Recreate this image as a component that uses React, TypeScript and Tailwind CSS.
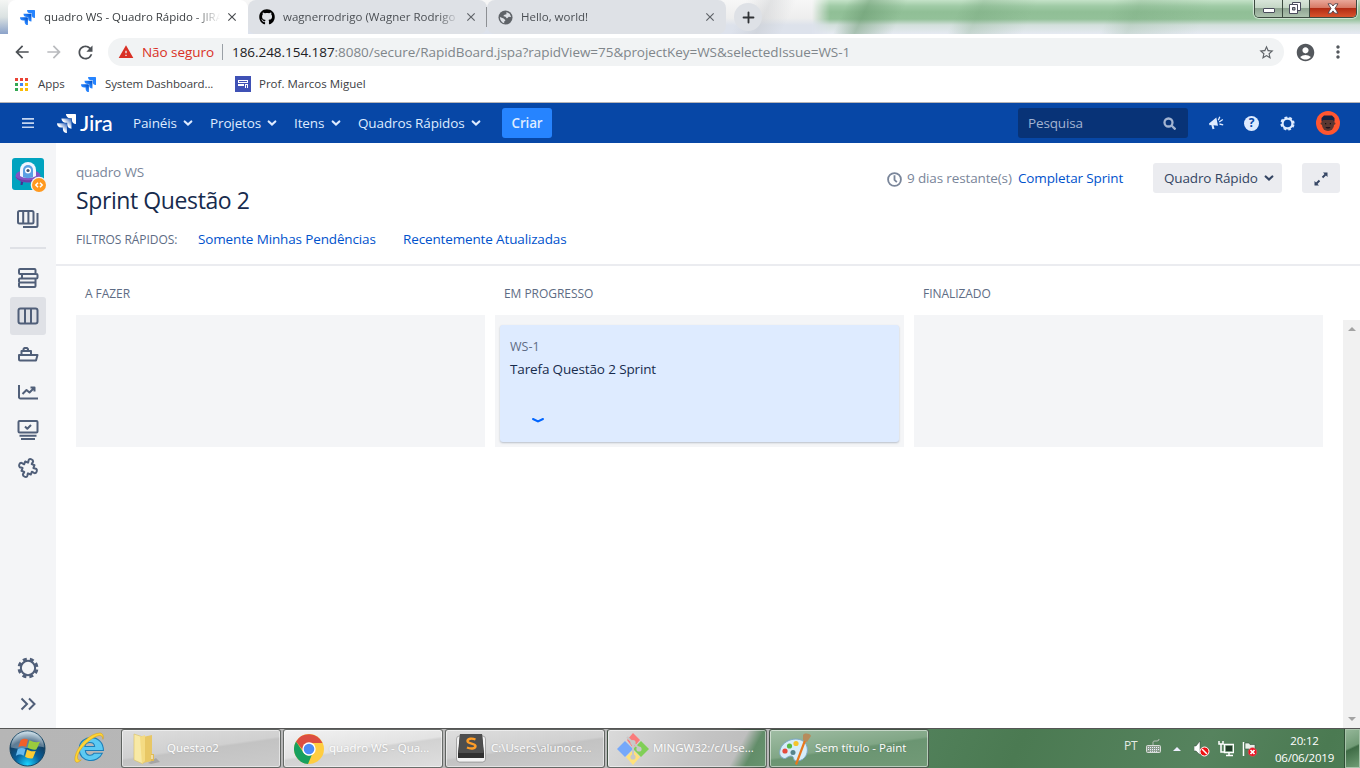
import React from "react";
import { MdAccountCircle, MdArrowBack, MdArrowForward, MdClose, MdMoreVert, MdPublic, MdRefresh, MdStarBorder, MdWarning } from "react-icons/md";
import { FaGithub } from "react-icons/fa";
import { Plus } from "lucide-react";

const JiraMark = ({ className, white = false, id }: { className: string; white?: boolean; id: string }) => {
  const dark = white ? "#4a78c4" : "#0052cc";
  const light = white ? "#ffffff" : "#2684ff";
  return (
    <svg className={className} viewBox="0 0 24 24">
      <defs>
        <linearGradient id={id} x1="1" y1="0" x2="0.35" y2="0.65">
          <stop offset="0.15" stopColor={dark} />
          <stop offset="0.8" stopColor={light} />
        </linearGradient>
      </defs>
      <path fill={light} d="M23 0H11.3a5.300 5.300 0 0 0 5.300 5.300h2.200v2.100a5.300 5.300 0 0 0 5.200 5.300V1a1 1 0 0 0-1-1z" />
      <path fill={`url(#${id})`} d="M17.200 5.800H5.600A5.300 5.300 0 0 0 10.900 11.100H13v2.200a5.300 5.300 0 0 0 5.300 5.200V6.800a1 1 0 0 0-1.100-1z" />
      <path fill={`url(#${id})`} d="M11.500 11.600H0a5.300 5.300 0 0 0 5.200 5.300h2.200v2.100a5.300 5.300 0 0 0 5.200 5V12.600a1 1 0 0 0-1.100-1z" />
    </svg>
  );
};

const Chevron = ({ className }: { className: string }) => (
  <svg className={className} viewBox="0 0 10 8" fill="none" stroke="currentColor" strokeWidth="2.200">
    <path d="M1.700 2.500L5 5.500l3.300-3" strokeLinecap="round" />
  </svg>
);

const Gear = ({ className, thick = 2.2 }: { className: string; thick?: number }) => (
  <svg className={className} viewBox="0 0 24 24" fill="none" stroke="currentColor">
    <circle cx="12" cy="12" r="7.800" strokeWidth={thick} />
    <circle cx="12" cy="12" r="9.700" strokeWidth="3.400" strokeDasharray="4.300 3.318" strokeDashoffset="-1.700" />
  </svg>
);

const SideIcon = ({ children }: { children: React.ReactNode }) => (
  <svg className="h-6 w-6" viewBox="0 0 24 24" fill="none" stroke="#505f79" strokeWidth="2" strokeLinejoin="round">
    {children}
  </svg>
);

const TabStrip = () => (
  <div className="flex h-[34px] shrink-0 overflow-hidden bg-[linear-gradient(180deg,#c4e2c8_0px,#a0cba6_6px,#90bf96_12px,#93c199_19px,#d3e0dc_25px,#e6eaf2_34px)]">
    <div className="flex h-full w-[832px] bg-[linear-gradient(115deg,transparent_88%,#b9bcc055_91%,transparent_94%),linear-gradient(180deg,#f7f7f7_0px,#eeeeee_18px,#dde2eb_25px,#dde2ec_34px)] [mask-image:linear-gradient(90deg,#000_812px,transparent_830px)]">
      <div className="h-full w-2 bg-[linear-gradient(180deg,#f4f6f4,#dbe2e2_50%,#8ba2c9)]" />
      <div className="flex h-full w-60 items-center rounded-t-lg bg-white pl-3">
        <JiraMark id="tab" className="h-[15px] w-[15px]" />
        <span className="ml-[9px] w-[176px] overflow-hidden whitespace-nowrap text-[11.5px] tracking-[-0.05px] text-[#3c4043] [mask-image:linear-gradient(90deg,#000_150px,transparent_176px)]">quadro WS - Quadro Rápido - JIRA</span>
        <MdClose className="ml-[5px] h-[14px] w-[14px] text-[#494c50]" />
      </div>
      <div className="flex h-full w-[239px] items-center rounded-lg bg-[#dee1e6] pl-[11px]">
        <FaGithub className="h-4 w-4 text-black" />
        <span className="ml-2 w-[172px] overflow-hidden whitespace-nowrap text-[11.5px] tracking-[0.02px] text-[#4b4f54] [mask-image:linear-gradient(90deg,#000_155px,transparent_176px)]">wagnerrodrigo (Wagner Rodrigo)</span>
        <MdClose className="ml-[9px] h-[14px] w-[14px] text-[#5f6368]" />
        <div className="ml-2 h-5 w-px bg-[#8d9094]" />
      </div>
      <div className="flex h-full w-[239px] items-center rounded-lg bg-[#dee1e6] pl-[11px]">
        <svg className="h-[15px] w-[15px]" viewBox="0 0 16 16"><circle cx="8" cy="8" r="7.500" fill="#5f6368" /><path d="M9 2.200l3.500 1.900L14 7.500l-2.500-.3L9.500 9 8 7.200 5.500 6.500 7 5l2-.6zM2 7.500l4 1.500 2 1.800-1.500 1.700.2 1.500C4 13.500 2 11 2 7.500z" fill="#dee1e6" /></svg>
        <span className="ml-[8px] w-[181px] whitespace-nowrap text-[11.5px] text-[#4b4f54]">Hello, world!</span>
        <MdClose className="ml-[1px] h-[14px] w-[14px] text-[#5f6368]" />
      </div>
      <div className="mt-[3px] ml-[8px] flex h-7 w-7 items-center justify-center rounded-full bg-[#dee1e6]">
        <Plus className="h-[17px] w-[17px] text-[#303336]" strokeWidth={2.6} />
      </div>
    </div>
    <div className="flex flex-1 justify-end bg-[linear-gradient(115deg,transparent_3%,#5d8e6470_7%,transparent_14%,transparent_24%,#6a9a7040_28%,transparent_38%,transparent_52%,#6a9a7033_57%,transparent_70%)] pr-[3px]">
      <div className="flex h-[18px] w-[103px] overflow-hidden rounded-b-[5px] border border-t-0 border-[#3c4a40] shadow-[0_0_1px_1px_#ffffff99]">
        <div className="flex w-[28px] items-end justify-center border-r border-[#3c4a40] bg-[linear-gradient(#d9e6da_0,#c4d6c5_45%,#8fa592_50%,#adc2ae)] pb-[4px]">
          <div className="h-[5px] w-3 rounded-[1px] border border-[#4a4c5c] bg-white" />
        </div>
        <div className="flex w-[27px] items-center justify-center border-r border-[#3c4a40] bg-[linear-gradient(#d9e6da_0,#c4d6c5_45%,#8fa592_50%,#adc2ae)]">
          <svg className="mr-[2px] mb-[2px] h-3 w-3" viewBox="0 0 12 12" fill="#fff" stroke="#4a4c5c"><path d="M3.500.5h8v8h-8z" /><path d="M.5 2.500h8v9h-8z" /><path d="M3.500 5.500h2.500v2.500H3.500z" fill="#9aa59c" /></svg>
        </div>
        <div className="flex flex-1 items-center justify-center bg-[linear-gradient(#e9a799_0,#d87b67_44%,#b32c14_50%,#d8532c)]">
          <svg className="mb-[1px] h-[11px] w-3" viewBox="0 0 12 11"><path d="M1 .8h3.200L6 3 7.800.8H11L8 5.400l3 4.800H7.800L6 7.900l-1.800 2.300H1l3-4.800z" fill="#fff" stroke="#51434c" strokeWidth=".9" /></svg>
        </div>
      </div>
    </div>
  </div>
);

const Toolbar = () => (
  <>
    <div className="flex h-9 shrink-0 items-center bg-white pl-[12px]">
      <MdArrowBack className="h-5 w-5 text-[#4d5156]" />
      <MdArrowForward className="ml-[12px] h-5 w-5 text-[#b9bbbe]" />
      <MdRefresh className="ml-[11px] h-[21px] w-[21px] text-[#4d5156]" />
      <div className="ml-[12px] flex h-7 w-[1176px] items-center rounded-full bg-[#f1f3f4] pl-[10px] text-[13.5px] whitespace-nowrap">
        <MdWarning className="h-4 w-4 text-[#d93025]" />
        <span className="ml-2 w-[72px] pt-px tracking-[-0.06px] text-[#d93025]">Não seguro</span>
        <span className="ml-2 h-4 w-px bg-[#9aa0a6]" />
        <span className="ml-[9px] w-[1025px] pt-px tracking-[-0.045px] text-[#80868b]"><span className="text-[#202124]">186.248.154.187</span>:8080/secure/RapidBoard.jspa?rapidView=75&amp;projectKey=WS&amp;selectedIssue=WS-1</span>
        <MdStarBorder className="ml-px h-[17px] w-[17px] text-[#5f6368]" />
      </div>
      <MdAccountCircle className="ml-[11px] h-[21px] w-[21px] text-[#54585d]" />
      <MdMoreVert className="ml-[12px] h-5 w-5 text-[#54585d]" />
    </div>
    <div className="flex h-[33px] shrink-0 items-start border-b border-[#b6b4b6] bg-white pt-[6px] pl-[15px] text-[11.5px] text-[#3c4043]">
      <div className="flex h-4 items-center whitespace-nowrap">
        <svg className="h-[13px] w-[13px]" viewBox="0 0 13 13">
          <path fill="#ea4335" d="M0 0h3v3H0zM5 0h3v3H5zM10 0h3v3h-3z" />
          <path fill="#34a853" d="M0 5h3v3H0zM0 10h3v3H0z" /><path fill="#4285f4" d="M5 5h3v3H5z" /><path fill="#fbbc05" d="M10 5h3v3h-3zM5 10h3v3H5zM10 10h3v3h-3z" />
        </svg>
        <span className="ml-[10px] w-[27px]">Apps</span>
        <JiraMark id="bookmark" className="ml-4 h-[15px] w-[15px]" />
        <span className="ml-[9px] w-[110px] tracking-[-0.1px]">System Dashboard...</span>
        <svg className="ml-5 h-4 w-4" viewBox="0 0 16 16"><path fill="#3f51b5" d="M0 0h16v16H0z" /><path fill="#fff" d="M3 4h10v3H3zM3 8h6v2H3zM10 8h3v4h-3z" /><path fill="#3f51b5" d="M4 5h8v1H4zM11 9h1v3h-1z" /></svg>
        <span className="ml-2">Prof. Marcos Miguel</span>
      </div>
    </div>
  </>
);

const NavItem = ({ label, width }: { label: string; width: string }) => (
  <div className="mr-[17px] flex items-center text-[#deebff]">
    <span className={`${width} pt-px whitespace-nowrap`}>{label}</span>
    <Chevron className="ml-[7px] h-2 w-[10px]" />
  </div>
);

const JiraHeader = () => (
  <header className="flex h-10 shrink-0 items-center bg-[#0747a6] text-[13.5px] tracking-[-0.13px]">
    <svg className="ml-[22px] h-3 w-3" viewBox="0 0 12 12" fill="#c5d6f0"><path d="M0 1h12v1.700H0zM0 5.200h12v1.700H0zM0 9.400h12v1.700H0z" /></svg>
    <JiraMark id="logo" white className="ml-[23px] h-[19px] w-[19px]" />
    <span className="ml-1 w-[33px] font-[Lato] text-[22px] leading-5 font-medium tracking-[-0.2px] text-white">Jira</span>
    <div className="ml-5 flex">
      <NavItem label="Painéis" width="w-[43px]" />
      <NavItem label="Projetos" width="w-[50px]" />
      <NavItem label="Itens" width="w-[30px]" />
      <NavItem label="Quadros Rápidos" width="w-[106px]" />
    </div>
    <button className="ml-[4px] h-[30px] w-[50px] rounded-[3px] bg-[#2684ff] pt-px font-semibold tracking-[-0.2px] text-[#deebff]">Criar</button>
    <div className="ml-auto flex h-[30px] w-[170px] items-center justify-between rounded-[3px] bg-[#083377] pr-3 pl-[10px] text-[#a3b4d1]">
      <span className="pt-px">Pesquisa</span>
      <svg className="h-[13px] w-[13px]" viewBox="0 0 13 13" fill="none" stroke="currentColor" strokeWidth="2.300"><circle cx="5.500" cy="5.500" r="4" /><path d="M8.500 8.500l4 4" /></svg>
    </div>
    <svg className="ml-[20px] h-4 w-4" viewBox="0 0 16 16" fill="#deebff">
      <path d="M8.300 2.500L10 10.800l-4.500-.6 1 3.600-2 .5-1.200-4.300-1.800.2L1 8.500z" />
      <path d="M10.300 5.300l1.500-3.500M11.200 7l3.600-2.500M11.500 9l3.700.8" stroke="#deebff" strokeWidth="1.300" />
    </svg>
    <div className="ml-[20px] flex h-[15px] w-[15px] items-center justify-center rounded-full bg-[#deebff] text-[12px] leading-none font-bold tracking-normal text-[#0747a6]">?</div>
    <Gear className="ml-[21px] h-[15px] w-[15px] text-[#deebff]" thick={3.4} />
    <svg className="mr-5 ml-[21px] h-6 w-6" viewBox="0 0 24 24"><circle cx="12" cy="12" r="12" fill="#ff5630" /><path d="M6 8h12v6a6 6 0 0 1-12 0z" fill="#5b3731" /><circle cx="5.800" cy="12.500" r="1.200" fill="#5b3731" /><circle cx="18.200" cy="12.500" r="1.200" fill="#5b3731" /><path d="M5.500 11V7L8 4.500h8L18.500 7v4l-1.500-2H7z" fill="#112345" /><path d="M9 12h1.200v1.200H9zm4.800 0H15v1.200h-1.200z" fill="#111" /><path d="M9.500 16h5c-.7 2-4.300 2-5 0z" fill="#1d1220" /></svg>
  </header>
);

const Sidebar = () => (
  <aside className="flex w-14 shrink-0 flex-col items-center bg-[#f4f5f7] text-[#505f79]">
    <div className="mt-[15px] h-8 w-8">
      <svg className="h-[36px] w-[36px]" viewBox="0 0 36 36">
        <rect width="32" height="32" rx="3" fill="#00a3bf" /><path d="M9 22l-.5 5h2l1-4zM20 22h3v6h-3z" fill="#403294" />
        <ellipse cx="16" cy="18" rx="12.500" ry="6.500" fill="#8254c4" /><path d="M3.500 18.500c5 5 20 5 25 0-2 7.500-22 8-25 0z" fill="#6b3fa8" />
        <path d="M8 18V12a8 8 0 0 1 16 0v6c-3 2.500-13 2.500-16 0z" fill="#f0f5ff" /><path d="M11 19v-7a5 5 0 0 1 10 0v7c-2 1.500-8 1.500-10 0z" fill="#5aa0e4" />
        <circle cx="16" cy="12.500" r="3" fill="#fff" /><circle cx="16" cy="12.500" r="1.600" fill="#42526e" />
        <circle cx="27" cy="27" r="8.300" fill="#f4f5f7" /><circle cx="27" cy="27" r="7" fill="#ff991f" /><path d="M26 24.800L23.800 27l2.200 2.200M28 24.800l2.200 2.200-2.200 2.200" fill="none" stroke="#fff" strokeWidth="1.500" />
      </svg>
    </div>
    <div className="mt-[17px]"><SideIcon><rect x="2" y="4" width="15.500" height="12.500" rx="1.500" /><path d="M7.200 4v12.500M12.400 4v12.500M21.500 6v12.500a1.500 1.500 0 0 1-1.500 1.500H7" /></SideIcon></div>
    <div className="mt-[16px] h-[2px] w-9 bg-[#dfe1e6]" />
    <div className="mt-[10px] flex flex-col">
      <div className="flex h-[38px] w-9 items-center justify-center"><SideIcon><path d="M4 3h14.500a1 1 0 0 1 1 1v4H4a1 1 0 0 1-1-1V4a1 1 0 0 1 1-1zM7 8h13.500a1 1 0 0 1 1 1v2.500a1 1 0 0 1-1 1H6V9M4 12.500h15.500v4H4a1 1 0 0 1-1-1v-2a1 1 0 0 1 1-1zM4 16.500h15.500V20a1 1 0 0 1-1 1H4a1 1 0 0 1-1-1v-2.500a1 1 0 0 1 1-1z" /></SideIcon></div>
      <div className="flex h-[38px] w-9 items-center justify-center rounded-[3px] bg-[#dfe1e6]"><SideIcon><rect x="2.500" y="4.500" width="19" height="15" rx="2" /><path d="M9 4.500v15M15 4.500v15" /></SideIcon></div>
      <div className="flex h-[38px] w-9 items-center justify-center"><SideIcon><path d="M3 13h18.500l-1.500 5.500H4a1 1 0 0 1-1-1zM5.500 13V9H15v4M7.500 9V7.200L8.500 6H11l1 1.200V9" /></SideIcon></div>
      <div className="flex h-[38px] w-9 items-center justify-center"><SideIcon><path d="M3 5v12.500A1.500 1.500 0 0 0 4.500 18.500H22M6.500 14l4-4 3 2.500 5-5M14.500 7.500h4v4" /></SideIcon></div>
      <div className="flex h-[38px] w-9 items-center justify-center"><SideIcon><rect x="2.500" y="3" width="19" height="11.500" rx="1" /><path d="M9 8.500l2.300 2.300L15 7M3.500 17.800h17M5 21h14" /></SideIcon></div>
      <div className="flex h-[38px] w-9 items-center justify-center"><SideIcon><path transform="rotate(22 12 12)" d="M10 7c.3-1.300-.6-1.800-.3-3 .6-1.800 4-1.800 4.600 0 .3 1.200-.6 1.700-.3 3h3v3c1.300.3 1.800-.6 3-.3 1.800.6 1.800 4 0 4.600-1.200.3-1.700-.6-3-.3v3h-3c-.3 1.300.6 1.800.3 3-.6 1.800-4 1.800-4.600 0-.3-1.200.6-1.700.3-3H7v-3c-1.300-.3-1.800.6-3 .3-1.800-.6-1.800-4 0-4.600 1.200-.3 1.700.6 3 .3V7z" /></SideIcon></div>
    </div>
    <Gear className="mt-[170px] h-[22px] w-[22px]" />
    <svg className="mt-[17px] h-4 w-4" viewBox="0 0 16 16" fill="none" stroke="currentColor" strokeWidth="2"><path d="M1.500 2.500L7 8l-5.500 5.500M9 2.500L14.500 8 9 13.500" /></svg>
  </aside>
);

const Column = ({ title, children }: { title: string; children?: React.ReactNode }) => (
  <section className="w-[409px]">
    <h2 className="flex h-[49px] items-center pt-[7px] pl-[9px] text-[12px] tracking-[-0.05px] font-medium text-[#5e6c84]">{title}</h2>
    <div className="h-[132px] bg-[#f4f5f7] px-[5px] pt-[10px]">{children}</div>
  </section>
);

const Board = () => (
  <main className="flex min-w-0 flex-1 flex-col bg-white text-[13.5px] tracking-[-0.14px]">
    <div className="flex h-[123px] shrink-0 justify-between border-b-2 border-[#ebecf0] pr-5 pl-5">
      <div className="whitespace-nowrap">
        <p className="mt-5 h-[18px] leading-[18px] text-[#7a869a]">quadro WS</p>
        <h1 className="mt-[4px] h-[30px] text-[23px] leading-[30px] tracking-[-0.4px] text-[#172b4d]">Sprint Questão 2</h1>
        <div className="mt-[15px] flex h-[18px] items-center">
          <span className="w-[122px] pt-px text-[12px] tracking-[-0.05px] text-[#5e6c84]">FILTROS RÁPIDOS:</span>
          <a className="w-[205px] text-[#0052cc]">Somente Minhas Pendências</a>
          <a className="text-[#0052cc]">Recentemente Atualizadas</a>
        </div>
      </div>
      <div className="mt-5 flex h-[30px] items-center whitespace-nowrap">
        <svg className="mt-[2px] h-[15px] w-[15px]" viewBox="0 0 14 14" fill="none" stroke="#7a869a" strokeWidth="1.700"><circle cx="7" cy="7" r="6" /><path d="M7 3v4.300l2.200 2.200" /></svg>
        <span className="ml-[5px] w-[111px] pt-px text-[#7a869a]">9 dias restante(s)</span>
        <a className="w-[135px] pt-px text-[#0052cc]">Completar Sprint</a>
        <button className="flex h-[30px] w-[129px] items-center rounded-[3px] bg-[#ebecf0] pl-[11px] text-[#344563]"><span className="w-[94px] pt-px text-left">Quadro Rápido</span><Chevron className="ml-[6px] h-2 w-[10px]" /></button>
        <button className="ml-5 flex h-[30px] w-[38px] items-center justify-center rounded-[3px] bg-[#ebecf0]">
          <svg className="mt-px h-[14px] w-[14px]" viewBox="0 0 14 14" fill="#344563" stroke="#344563"><path d="M9 .5h4.500V5zM.5 9v4.500H5z" stroke="none" /><path d="M8.500 5.500l3-3M2.500 11.500l3-3" strokeWidth="1.900" /></svg>
        </button>
      </div>
    </div>
    <div className="flex flex-1">
      <div className="ml-5 flex gap-[10px]">
        <Column title="A FAZER" />
        <Column title="EM PROGRESSO">
          <article className="flex h-[117px] flex-col rounded-[3px] bg-[#deebff] pt-3 pl-[10px] shadow-[0_1px_2px_#091e4240]">
            <span className="h-[18px] text-[12.5px] leading-[20px] tracking-normal text-[#5e6c84]">WS-1</span>
            <span className="mt-[5px] h-[18px] leading-[18px] text-[#172b4d]">Tarefa Questão 2 Sprint</span>
            <svg className="mt-[38px] ml-[21px] h-2 w-[14px]" viewBox="0 0 14 8" fill="none" stroke="#0065ff" strokeWidth="2"><path d="M2 3l5 2.500L12 3" strokeLinecap="round" /></svg>
          </article>
        </Column>
        <Column title="FINALIZADO" />
      </div>
      <div className="mt-[54px] ml-auto flex w-[17px] flex-col items-center justify-between bg-[#f1f1f1] py-[7px]">
        <div className="border-x-4 border-b-4 border-x-transparent border-b-[#a3a3a3]" />
        <div className="border-x-4 border-t-4 border-x-transparent border-t-[#a3a3a3]" />
      </div>
    </div>
  </main>
);

const TaskButton = ({ icon, label, tone }: { icon: React.ReactNode; label: string; tone: string }) => (
  <div className={`mr-[2px] flex h-[39px] w-[160px] shrink-0 items-center rounded-[3px] border border-[#303631b0] pl-[9px] text-[11.5px] whitespace-nowrap text-white shadow-[inset_0_0_0_1px_#ffffff80] [text-shadow:0_0_2px_#0003] ${tone}`}>
    <div className="flex w-8 items-center justify-center">{icon}</div>
    <span className="mb-[2px] ml-1">{label}</span>
  </div>
);

const glass = "bg-[linear-gradient(172deg,#dedede_0,#d0d0d0_48%,#c3c3c3_52%,#cbcbcb)]";

const Taskbar = () => (
  <footer className="flex h-10 shrink-0 items-end border-t border-[#555] bg-[linear-gradient(115deg,#b6b6b6_0,#b9b9b9_743px,#568560_770px,#4b7a52_930px,#56835e_1100px,#4b7a52_1210px,#56835e_1360px)]">
    <div className="flex h-[39px] w-[55px] items-center justify-center">
      <svg className="h-[37px] w-[37px]" viewBox="0 0 38 38">
        <defs><radialGradient id="orb" cx=".5" cy=".95" r=".9"><stop stopColor="#19d4ff" /><stop offset=".4" stopColor="#08609c" /><stop offset=".75" stopColor="#123d60" /><stop offset="1" stopColor="#a8c4d4" /></radialGradient></defs>
        <circle cx="19" cy="19" r="18" fill="url(#orb)" stroke="#164462" /><path d="M2 18a17 17 0 0 1 34 0c-9-4-22 4-34 0z" fill="#fff" opacity=".32" />
        <path d="M12 10.500c3-2 5-2 7.500-.5L17.500 17.500c-3-1.500-5-1-8 0z" fill="#f0602a" /><path d="M21 10.500c4 2 7 2.500 11 1.500-2 3-2 5-4 8-3 .5-6 0-9-2z" fill="#9acb3c" /><path d="M9 19.500c3-1.500 5.500-1.500 8 0l-2 7c-3-2-5-1.500-8 0z" fill="#65b9ee" /><path d="M18.500 20c3 2 6 2 9 1.500l-3 7.500c-3 .5-5.500 0-8-1.500z" fill="#fbcc34" />
      </svg>
    </div>
    <div className="flex h-[39px] w-[66px] items-center justify-center">
      <svg className="mb-[2px] ml-[2px] h-[33px] w-[33px]" viewBox="0 0 32 32"><path d="M29.500 19H12c.4 5 6 6 8.500 2.500h8C24 32 6 31 6 17.500 6 3 29.500 2 29.500 19zm-8.500-4c-.5-5-8.500-5-9.500 0z" fill="#5ccaf3" stroke="#1b7eb9" strokeWidth="1" /><path d="M8 28c-4 4-7 3-6-3C4 14 17 2 26 2c3 0 4 3 3 6 0-4-3-4-6-3C14 9 6 18 4.500 24c-.5 4 1 5 3.500 4z" fill="#ffd535" stroke="#d59b12" strokeWidth=".5" /></svg>
    </div>
    <TaskButton label="Questao2" tone={glass} icon={<svg className="h-[34px] w-8" viewBox="0 0 32 34"><path d="M17 31l8-5 4 4-9 2z" fill="#777" opacity=".4" /><path d="M12 5l9-2v26l-9 2z" fill="#e8c765" /><path d="M3 2l9 3v27l-9-4z" fill="#f8e9a5" stroke="#d9bf62" strokeWidth=".6" /><path d="M9 5l5-2v26l-3 3z" fill="#f4db83" /><path d="M20 22h3v7h-3z" fill="#e0bb54" /><path d="M21 23v4" stroke="#fff" /></svg>} />
    <TaskButton label="quadro WS - Qua..." tone="bg-[linear-gradient(172deg,#f2f2f2_0,#e3e3e3_48%,#d2d2d2_52%,#dedede)]" icon={<svg className="h-[30px] w-[30px]" viewBox="0 0 30 30"><circle cx="15" cy="15" r="15" fill="#ffcd40" /><path d="M2 7.500A15 15 0 0 1 28.500 9H15a6 6 0 0 0-5.800 7.500z" fill="#dc4e41" /><path d="M2 7.500l7.500 11a6 6 0 0 0 8.500 2L14 30A15 15 0 0 1 2 7.500z" fill="#17a05e" /><circle cx="15" cy="15" r="6.700" fill="#fff" /><circle cx="15" cy="15" r="5.300" fill="#4c8bf5" /></svg>} />
    <TaskButton label="C:\Users\alunoce..." tone={glass} icon={<svg className="mb-[2px] h-[30px] w-8" viewBox="0 0 32 30"><rect x="1.500" y="3" width="29" height="26" rx="3" fill="#f2f2f2" stroke="#666" strokeWidth=".5" /><path d="M5 1h22l2 19v5H3v-5z" fill="#303030" /><path d="M5 1h22l1.500 19h-25z" fill="#4e4e4e" /><path d="M20.500 6.500c-3.500-1.500-8-1-8 1.500 0 3.200 8 2 8 5 0 3-5 3-8.500 1.500" stroke="#ff9d27" strokeWidth="2.400" fill="none" /></svg>} />
    <TaskButton label="MINGW32:/c/Use..." tone="bg-[linear-gradient(118deg,#dadada_0,#c4c4c4_55%,#bebebe_79%,#628d69_88%,#699470)]" icon={<svg className="h-8 w-8" viewBox="0 0 32 32"><path d="M16 0l7 7-7 8-6-8z" fill="#fa7b7b" /><path d="M24 8l8 8-8 8-8-8z" fill="#80cf57" /><path d="M8 8l8 8-8 8-8-8z" fill="#76a8fa" /><path d="M16 17l7 7-7 8-7-8z" fill="#ffe17a" /><path d="M10 4l6 6v15M16 10l7 6" stroke="#c8c8c8" strokeWidth="2" fill="none" /><circle cx="16" cy="9.500" r="2.600" fill="#c8c8c8" /><circle cx="22" cy="16" r="2.600" fill="#c8c8c8" /><circle cx="16" cy="24" r="2.600" fill="#c8c8c8" /></svg>} />
    <TaskButton label="Sem título - Paint" tone="bg-[linear-gradient(172deg,#a0bda4_0,#81a686_48%,#6b9572_52%,#729a77)]" icon={<svg className="h-8 w-8" viewBox="0 0 32 32"><path d="M1 17C4 6 21 2 27 11c4 8-1 17-9 17-5 0-2-5-6-5-4 0-5 4-8 2-3-1-4-5-3-8z" fill="#d7edf9" stroke="#7da9c7" /><circle cx="6" cy="18" r="2.600" fill="#e44c3d" /><circle cx="10.500" cy="13" r="2.600" fill="#57b947" /><circle cx="17" cy="10.500" r="2.600" fill="#f5c42c" /><circle cx="14" cy="19.500" r="2.500" fill="#55848c" /><path d="M25 7l2 1-9 24-2-1z" fill="#e8771d" /><path d="M24 2c2-3 8-1 8 1l-4 6-4-2z" fill="#b78b5c" /></svg>} />
    <div className="ml-auto flex h-[39px] items-center text-[11.5px] text-white">
      <span className="mb-[6px] w-[22px] text-[12px] tracking-[-0.2px] text-[#e3ebe4]">PT</span>
      <svg className="mb-[5px] h-[15px] w-[15px]" viewBox="0 0 15 15"><path d="M7 6V3q0-1 2-1h2q2 0 2-2" fill="none" stroke="#b4bdb5" /><rect x=".5" y="6.500" width="14" height="7" rx="1" fill="#8c9e8e" stroke="#d8ddd8" /><path d="M2 8.500h11M2 10.500h11M4 12.300h7" stroke="#eef" strokeDasharray="1 1" /></svg>
      <div className="ml-[12px] border-x-4 border-b-4 border-x-transparent border-b-[#eef]" />
      <svg className="ml-[13px] h-4 w-4" viewBox="0 0 16 16"><path d="M0 5h2l4-5v14L2 10H0z" fill="#fff" stroke="#33463a" strokeWidth=".5" /><circle cx="10.500" cy="10.500" r="4.500" fill="#e11" stroke="#fff" /><path d="M8 8l5 5" stroke="#fff" strokeWidth="1.500" /></svg>
      <svg className="ml-[8px] h-4 w-4" viewBox="0 0 16 16" fill="none" stroke="#fff"><path d="M1 0v3h4V0M3 3v8h3M6.500 3.500h9v8h-9zM8 14.500h7M11 12v2" strokeWidth="1.500" /><path d="M8 5h6v5H8z" fill="#233d2a" stroke="none" /></svg>
      <svg className="ml-[8px] h-4 w-4" viewBox="0 0 16 16"><path d="M1.500 1v14" stroke="#fff" strokeWidth="1.500" /><path d="M3 2h4l1 1.500h5V9H8L7 8H3z" fill="#e8f0e8" stroke="#31503a" strokeWidth=".6" /><circle cx="10.500" cy="11" r="4.300" fill="#e12" stroke="#c66" strokeWidth=".6" /><path d="M8.500 9l4 4m0-4l-4 4" stroke="#fff" strokeWidth="1.700" /></svg>
      <div className="ml-[15px] w-[63px] text-center leading-[17px] tracking-[-0.2px] whitespace-nowrap"><div>20:12</div><div>06/06/2019</div></div>
      <div className="ml-[9px] h-[39px] w-[15px] border border-[#a8c4aa] bg-[linear-gradient(155deg,#94b698_0,#719b76_45%,#3f6c46_50%,#6f9c74)] shadow-[-1px_0_0_#2f4f35]" />
    </div>
  </footer>
);

export default function App() {
  return (
    <div className="flex h-[768px] w-[1360px] flex-col overflow-hidden bg-white font-['Open_Sans','Noto_Sans',sans-serif]">
      <TabStrip />
      <Toolbar />
      <JiraHeader />
      <div className="flex min-h-0 flex-1"><Sidebar /><Board /></div>
      <Taskbar />
    </div>
  );
}
